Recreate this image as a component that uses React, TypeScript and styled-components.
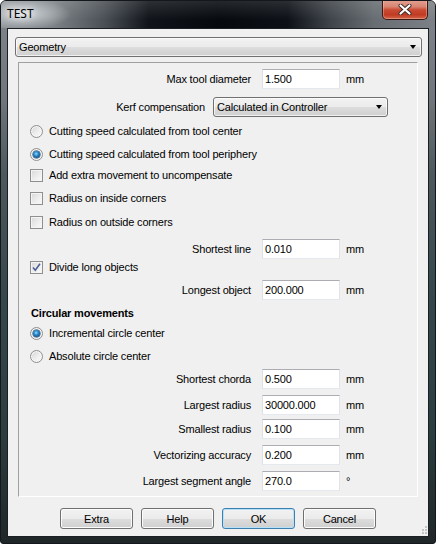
import React from 'react'
import styled, { createGlobalStyle } from 'styled-components'

const GlobalStyle = createGlobalStyle`
  html, body {
    margin: 0;
    padding: 0;
    width: 436px;
    height: 544px;
    overflow: hidden;
    background: #ffffff;
  }
  body {
    font-family: "Liberation Sans", Arial, sans-serif;
    font-size: 11px;
    letter-spacing: -0.17px;
    color: #000;
  }
`

const App = () => {
    return (
        <>
            <GlobalStyle />
            <Window>
                <TitleBar>
                    <Title>TEST</Title>
                    <CloseButton>
                        <svg width="14" height="11" viewBox="0 0 14 11">
                            <path d="M2.5 1.5 L11.5 9.5 M11.5 1.5 L2.5 9.5" stroke="#3a2a28" strokeWidth="4" strokeLinecap="round" />
                            <path d="M2.5 1.5 L11.5 9.5 M11.5 1.5 L2.5 9.5" stroke="#ffffff" strokeWidth="2.2" strokeLinecap="round" />
                        </svg>
                    </CloseButton>
                </TitleBar>

                <Client>
                    <PageCombo>
                        <ComboText>Geometry</ComboText>
                        <Arrow />
                    </PageCombo>

                    <Panel>
                        <Field $mt={0} label="Max tool diameter" value="1.500" unit="mm" />

                        <Row $mt={8} $h={20}>
                            <Label $w={175}>Kerf compensation</Label>
                            <KerfCombo>
                                <ComboText>Calculated in Controller</ComboText>
                                <Arrow />
                            </KerfCombo>
                        </Row>

                        <Toggle $mt={6} kind="radio" label="Cutting speed calculated from tool center" />
                        <Toggle $mt={7} kind="radio" checked label="Cutting speed calculated from tool periphery" />
                        <Toggle $mt={5} kind="check" label="Add extra movement to uncompensate" />
                        <Toggle $mt={7} kind="check" label="Radius on inside corners" />
                        <Toggle $mt={8} kind="check" label="Radius on outside corners" />

                        <Field $mt={9} label="Shortest line" value="0.010" unit="mm" />
                        <Toggle $mt={0} kind="check" checked label="Divide long objects" />
                        <Field $mt={5} label="Longest object" value="200.000" unit="mm" />

                        <Row $mt={5} $h={16}>
                            <Heading>Circular movements</Heading>
                        </Row>

                        <Toggle $mt={4} kind="radio" checked label="Incremental circle center" />
                        <Toggle $mt={7} kind="radio" label="Absolute circle center" />

                        <Field $mt={5} label="Shortest chorda" value="0.500" unit="mm" />
                        <Field $mt={6} label="Largest radius" value="30000.000" unit="mm" />
                        <Field $mt={4} label="Smallest radius" value="0.100" unit="mm" />
                        <Field $mt={6} label="Vectorizing accuracy" value="0.200" unit="mm" />
                        <Field $mt={6} label="Largest segment angle" value="270.0" unit="°" />
                    </Panel>

                    <ButtonBar>
                        <Button>Extra</Button>
                        <Button>Help</Button>
                        <Button $default>OK</Button>
                        <Button>Cancel</Button>
                    </ButtonBar>

                    <Grip width="6" height="8" viewBox="0 0 6 8">
                        <rect x="4" y="0" width="2" height="2" fill="#c4c4c4" />
                        <rect x="1" y="3" width="2" height="2" fill="#c4c4c4" />
                        <rect x="4" y="3" width="2" height="2" fill="#c4c4c4" />
                        <rect x="1" y="6" width="2" height="2" fill="#c4c4c4" />
                        <rect x="4" y="6" width="2" height="2" fill="#c4c4c4" />
                    </Grip>
                </Client>
            </Window>
        </>
    )
}

export default App

type FieldProps = { label: string; value: string; unit?: string; $mt: number }

const Field = ({ label, value, unit, $mt }: FieldProps) => (
    <Row $mt={$mt} $h={20}>
        <Label $w={221}>{label}</Label>
        <Input>{value}</Input>
        <Unit>{unit}</Unit>
    </Row>
)

type ToggleProps = { label: string; kind: 'radio' | 'check'; checked?: boolean; $mt: number }

const Toggle = ({ label, kind, checked, $mt }: ToggleProps) => (
    <Row $mt={$mt} $h={16}>
        {kind === 'radio' ? (
            <Radio>{checked && <RadioDot />}</Radio>
        ) : (
            <Check>
                {checked && (
                    <svg width="11" height="11" viewBox="0 0 11 11">
                        <path d="M2 5.5 L4.3 8.3 L9 1.8" fill="none" stroke="#4a5d93" strokeWidth="1.5" />
                    </svg>
                )}
            </Check>
        )}
        <ToggleText>{label}</ToggleText>
    </Row>
)

export const Window = styled.div`
    box-sizing: border-box;
    width: 436px;
    height: 544px;
    display: flex;
    flex-direction: column;
    border: 1px solid #14171b;
    border-radius: 6px 6px 3px 3px;
    overflow: hidden;
    background: linear-gradient(to bottom, #80868b 0%, #70767b 18%, #4d585c 32%, #34474a 55%, #2b3d3f 80%, #1f2628 100%);
`
export const TitleBar = styled.div`
    height: 27px;
    flex: none;
    display: flex;
    align-items: flex-start;
    justify-content: space-between;
    padding: 0 7px 0 6px;
    background:
        radial-gradient(ellipse 48px 16px at 22px 13px, rgba(225, 229, 233, 0.85), rgba(225, 229, 233, 0)),
        linear-gradient(to bottom, rgba(255, 255, 255, 0.12), rgba(255, 255, 255, 0) 70%),
        linear-gradient(to right, #8a9095 0%, #7c8287 12%, #4a4f55 24%, #10141a 34%, #06090e 50%, #0d1117 66%, #40454b 76%, #676d72 86%, #7b8186 100%);
`
export const Title = styled.div`
    padding-top: 5px;
    font-family: "Noto Sans", "Open Sans", sans-serif;
    font-size: 12px;
    letter-spacing: 0;
    line-height: 16px;
    color: #000;
    text-shadow: 0 0 6px #ffffff, 0 0 10px rgba(255, 255, 255, 0.9);
`
export const CloseButton = styled.div`
    box-sizing: border-box;
    width: 46px;
    height: 20px;
    margin-top: -1px;
    display: flex;
    align-items: center;
    justify-content: center;
    border: 1px solid #3d1711;
    border-top: none;
    border-radius: 0 0 5px 5px;
    background: linear-gradient(to bottom, #e3a394 0%, #d88572 35%, #c94a33 52%, #c13b22 78%, #d4674c 100%);
    box-shadow: inset 0 0 0 1px rgba(255, 220, 210, 0.35);
`
export const Client = styled.div`
    position: relative;
    flex: 1;
    display: flex;
    flex-direction: column;
    margin: 0 6px 6px 6px;
    border: 1px solid #1b1f23;
    background: #f0f0f0;
`
const comboLook = `
    box-sizing: border-box;
    display: flex;
    align-items: center;
    justify-content: space-between;
    height: 20px;
    border: 1px solid #707070;
    border-radius: 3px;
    background: linear-gradient(to bottom, #f2f2f2 0%, #ebebeb 50%, #dddddd 51%, #cfcfcf 100%);
    box-shadow: inset 0 0 0 1px rgba(255, 255, 255, 0.7);
`
export const PageCombo = styled.div`
    ${comboLook}
    margin: 8px 6px 0 7px;
    padding: 0 5px 0 3px;
`
export const KerfCombo = styled.div`
    ${comboLook}
    width: 175px;
    margin-left: 8px;
    padding: 0 5px 0 3px;
`
export const ComboText = styled.span`
    line-height: 18px;
`
export const Arrow = styled.span`
    width: 0;
    height: 0;
    border-left: 3.5px solid transparent;
    border-right: 3.5px solid transparent;
    border-top: 4px solid #000;
`
export const Panel = styled.div`
    display: flex;
    flex-direction: column;
    margin: 5px 10px 0 10px;
    padding: 6px 0 5px 11px;
    border: 1px solid;
    border-color: #a0a0a0 #ffffff #ffffff #a0a0a0;
`
export const Row = styled.div<{ $mt: number; $h: number }>`
    display: flex;
    align-items: center;
    margin-top: ${p => p.$mt}px;
    height: ${p => p.$h}px;
    white-space: nowrap;
`
export const Label = styled.div<{ $w: number }>`
    width: ${p => p.$w}px;
    text-align: right;
`
export const Input = styled.div`
    box-sizing: border-box;
    width: 78px;
    height: 20px;
    margin-left: 11px;
    padding-left: 2px;
    line-height: 18px;
    background: #ffffff;
    border: 1px solid;
    border-color: #abadb3 #e2e3ea #e3e9ef #dbdfe6;
`
export const Unit = styled.div`
    margin-left: 6px;
`
export const Radio = styled.span`
    box-sizing: border-box;
    width: 13px;
    height: 13px;
    display: flex;
    align-items: center;
    justify-content: center;
    border-radius: 50%;
    border: 1px solid #8e8f8f;
    background: linear-gradient(135deg, #d4d4d4 0%, #eeeeee 55%, #fbfbfb 100%);
    box-shadow: inset 0 0 0 1px #f6f6f6;
`
export const RadioDot = styled.span`
    width: 7px;
    height: 7px;
    border-radius: 50%;
    background: radial-gradient(circle at 45% 40%, #8ee0ff 0%, #2d8fd0 35%, #0f4c86 75%, #15406b 100%);
    box-shadow: 0 0 0 0.5px #1d3f63;
`
export const Check = styled.span`
    box-sizing: border-box;
    width: 13px;
    height: 13px;
    display: flex;
    align-items: center;
    justify-content: center;
    border: 1px solid #8e8f8f;
    background: linear-gradient(135deg, #d8d8d8 0%, #ededed 55%, #fafafa 100%);
    box-shadow: inset 0 0 0 1px #f4f4f4;
`
export const ToggleText = styled.span`
    margin-left: 6px;
`
export const Heading = styled.div`
    margin-left: 1px;
    font-weight: bold;
`
export const ButtonBar = styled.div`
    display: flex;
    justify-content: center;
    gap: 8px;
    margin-top: 11px;
`
export const Button = styled.div<{ $default?: boolean }>`
    box-sizing: border-box;
    width: 73px;
    height: 21px;
    display: flex;
    align-items: center;
    justify-content: center;
    border: 1px solid ${p => (p.$default ? '#3c7fb1' : '#707070')};
    border-radius: 3px;
    background: linear-gradient(to bottom, #f2f2f2 0%, #ebebeb 50%, #dddddd 51%, #cfcfcf 100%);
    box-shadow: inset 0 0 0 1px ${p => (p.$default ? '#b6e1f7' : '#fcfcfc')};
`
export const Grip = styled.svg`
    position: absolute;
    right: 1px;
    bottom: 2px;
`
